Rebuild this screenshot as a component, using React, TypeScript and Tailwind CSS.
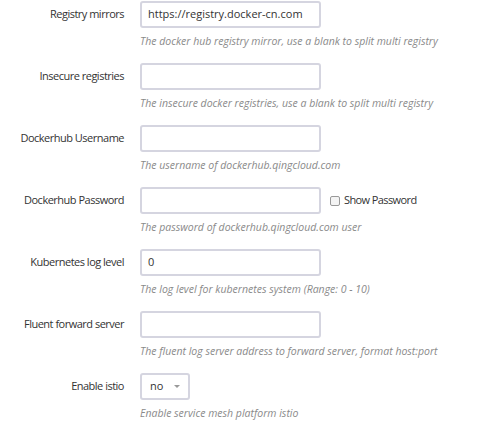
import React from "react";

type Field = {
  label: string;
  value?: string;
  help: string;
  kind?: "text" | "password" | "select";
};

const fields: Field[] = [
  {
    label: "Registry mirrors",
    value: "https://registry.docker-cn.com",
    help: "The docker hub registry mirror, use a blank to split multi registry",
  },
  {
    label: "Insecure registries",
    help: "The insecure docker registries, use a blank to split multi registry",
  },
  {
    label: "Dockerhub Username",
    help: "The username of dockerhub.qingcloud.com",
  },
  {
    label: "Dockerhub Password",
    help: "The password of dockerhub.qingcloud.com user",
    kind: "password",
  },
  {
    label: "Kubernetes log level",
    value: "0",
    help: "The log level for kubernetes system (Range: 0 - 10)",
  },
  {
    label: "Fluent forward server",
    help: "The fluent log server address to forward server, format host:port",
  },
  {
    label: "Enable istio",
    value: "no",
    help: "Enable service mesh platform istio",
    kind: "select",
  },
];

export default function App() {
  return (
    <div
      className="w-[493px] h-[440px] bg-white pt-[1px] text-[#333]"
      style={{ fontFamily: '"Open Sans", "Liberation Sans", sans-serif' }}
    >
      <div className="flex flex-col gap-[14px]">
        {fields.map((f) => (
          <div key={f.label} className="flex">
            {/* Label */}
            <div className="w-[124px] h-[27px] flex items-center justify-end text-[11px] tracking-[-0.5px] text-[#333] whitespace-nowrap">
              {f.label}
            </div>

            {/* Control + help */}
            <div className="ml-[16px] flex flex-col">
              <div className="flex items-center h-[27px]">
                {f.kind === "select" ? (
                  <div className="w-[50px] h-[27px] border-2 border-[#d5d5e0] rounded-[3px] flex items-center pl-[8px] pr-[8px] justify-between text-[11px] text-[#333]">
                    <span>{f.value}</span>
                    <span className="w-0 h-0 border-l-[3px] border-r-[3px] border-t-[3px] border-l-transparent border-r-transparent border-t-[#999]" />
                  </div>
                ) : (
                  <div className="w-[181px] h-[27px] border-2 border-[#d5d5e0] rounded-[3px] flex items-center px-[6px] text-[11px] text-[#333] whitespace-nowrap overflow-hidden">
                    {f.value}
                  </div>
                )}

                {f.kind === "password" && (
                  <label className="ml-[9px] flex items-center text-[11px] tracking-[-0.6px] text-[#333] whitespace-nowrap">
                    <span className="w-[10px] h-[10px] border border-[#999] rounded-[2px] bg-[#f4f4f4] mr-[4px]" />
                    Show Password
                  </label>
                )}
              </div>
              <div className="mt-[5px] text-[10.5px] leading-[16px] italic text-[#8a8a8a] whitespace-nowrap">
                {f.help}
              </div>
            </div>
          </div>
        ))}
      </div>
    </div>
  );
}
